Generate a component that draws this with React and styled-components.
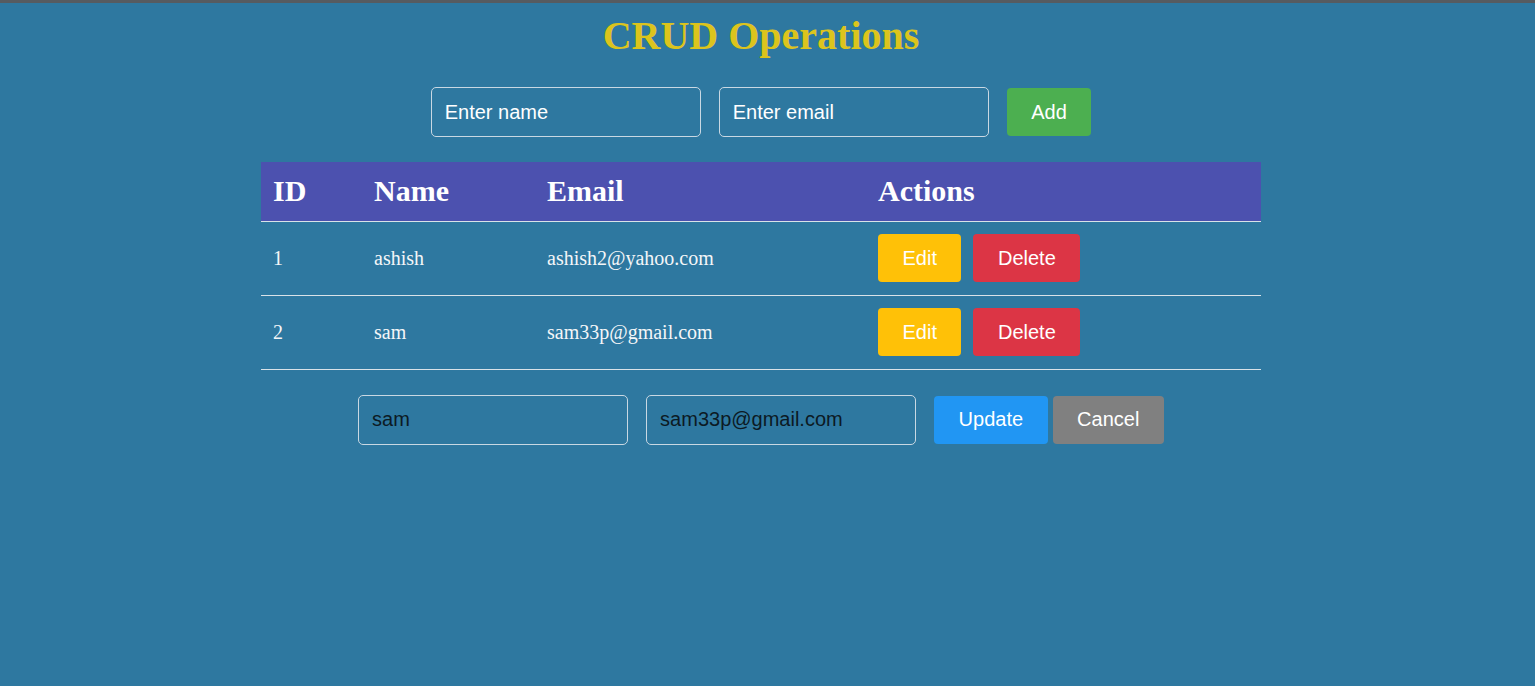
import React, { useState } from "react";
import styled, { createGlobalStyle } from "styled-components";

const GlobalStyle = createGlobalStyle`
  html, body { margin: 0; padding: 0; background: #2e78a0; }
  body { font-family: "Liberation Serif", "Times New Roman", serif; }
  * { box-sizing: border-box; }
`;

const Page = styled.div`
  min-height: 100vh;
  border-top: 3px solid #565b60;
  padding-right: 13px;
  background: #2e78a0;
`;

const Container = styled.div`
  width: 1000px;
  margin: 0 auto;
`;

const Title = styled.h1`
  margin: 10px 0 0;
  font-family: "Liberation Serif", "Times New Roman", serif;
  font-size: 40px;
  line-height: 46px;
  font-weight: bold;
  color: #dcc41d;
  text-align: center;
`;

const FormRow = styled.div`
  display: flex;
  align-items: center;
  justify-content: center;
  margin-top: ${(p) => p.$top}px;
`;

const Field = styled.input`
  width: 270px;
  height: 50px;
  margin-right: ${(p) => p.$gap}px;
  padding: 0 13px;
  border: 1px solid #c9d8e3;
  border-radius: 5px;
  background: transparent;
  font-family: "Liberation Sans", Arial, sans-serif;
  font-size: 20px;
  color: #0c1a24;
  outline: none;
  &::placeholder { color: #ffffff; opacity: 1; }
`;

const Button = styled.button`
  height: 48px;
  padding: 0 24.5px;
  margin-right: ${(p) => p.$gap || 0}px;
  border: none;
  border-radius: 4px;
  background: ${(p) => p.$bg};
  color: #ffffff;
  font-family: "Liberation Sans", Arial, sans-serif;
  font-size: 20px;
  cursor: pointer;
`;

const Table = styled.table`
  width: 1000px;
  margin-top: 25px;
  border-collapse: collapse;
  table-layout: fixed;
`;

const Th = styled.th`
  width: ${(p) => p.$w}px;
  height: 59px;
  padding: 0 12px;
  background: #4c51af;
  color: #ffffff;
  font-family: "Liberation Serif", "Times New Roman", serif;
  font-size: 30px;
  font-weight: bold;
  text-align: left;
  vertical-align: middle;
`;

const Row = styled.tr`
  border-bottom: 1px solid #d9e2e8;
`;

const Td = styled.td`
  height: 74px;
  padding: 0 12px;
  color: #f4f6f8;
  font-family: "Liberation Serif", "Times New Roman", serif;
  font-size: 20px;
  vertical-align: middle;
`;

const Actions = styled.div`
  display: flex;
  align-items: center;
  gap: 12px;
`;

export default function App() {
  const [users] = useState([
    { id: 1, name: "ashish", email: "ashish2@yahoo.com" },
    { id: 2, name: "sam", email: "sam33p@gmail.com" },
  ]);
  const [editName, setEditName] = useState("sam");
  const [editEmail, setEditEmail] = useState("sam33p@gmail.com");

  return (
    <>
      <GlobalStyle />
      <Page>
        <Container>
          <Title>CRUD Operations</Title>
          <FormRow $top={28}>
            <Field $gap={18} placeholder="Enter name" />
            <Field $gap={18} placeholder="Enter email" />
            <Button $bg="#4caf50">Add</Button>
          </FormRow>
          <Table>
            <thead>
              <Row>
                <Th $w={101}>ID</Th>
                <Th $w={173}>Name</Th>
                <Th $w={331}>Email</Th>
                <Th $w={395}>Actions</Th>
              </Row>
            </thead>
            <tbody>
              {users.map((u) => (
                <Row key={u.id}>
                  <Td>{u.id}</Td>
                  <Td>{u.name}</Td>
                  <Td>{u.email}</Td>
                  <Td>
                    <Actions>
                      <Button $bg="#ffc107">Edit</Button>
                      <Button $bg="#dc3545">Delete</Button>
                    </Actions>
                  </Td>
                </Row>
              ))}
            </tbody>
          </Table>
          <FormRow $top={25}>
            <Field $gap={18} value={editName} onChange={(e) => setEditName(e.target.value)} />
            <Field $gap={18} value={editEmail} onChange={(e) => setEditEmail(e.target.value)} />
            <Button $bg="#2196f3" $gap={5}>Update</Button>
            <Button $bg="#808080">Cancel</Button>
          </FormRow>
        </Container>
      </Page>
    </>
  );
}
